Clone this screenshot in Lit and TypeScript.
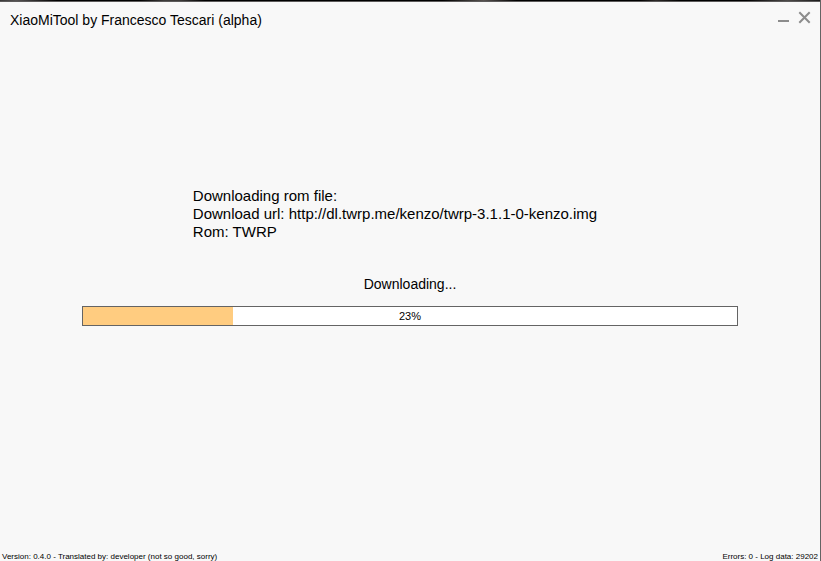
import { LitElement, css, html } from "lit";
import { customElement, property, state } from "lit/decorators.js";

@customElement("title-bar")
class TitleBar extends LitElement {
  @property() heading = "";

  static styles = css`
    :host {
      display: block;
    }
    .bar {
      display: flex;
      justify-content: space-between;
      align-items: flex-start;
      padding: 8px 8px 0 10px;
    }
    .heading {
      margin: 0;
      font-size: 14px;
      font-weight: 400;
      line-height: 20px;
    }
    .controls {
      display: flex;
      gap: 6px;
    }
    .control {
      display: flex;
      align-items: center;
      justify-content: center;
      width: 15px;
      height: 15px;
      padding: 0;
      border: 0;
      background: none;
      color: #8c8c8c;
    }
    .control:hover {
      color: #444444;
    }
    .icon {
      display: block;
      flex: none;
    }
  `;

  render() {
    return html`
      <header class="bar">
        <h1 class="heading">${this.heading}</h1>
        <div class="controls">
          <button class="control" type="button" aria-label="Minimize">
            <svg class="icon" width="15" height="15" viewBox="0 0 15 15" fill="currentColor">
              <path d="M2 10H13V12H2Z" />
            </svg>
          </button>
          <button class="control" type="button" aria-label="Close">
            <svg class="icon" width="15" height="15" viewBox="0 0 15 15" stroke="currentColor" stroke-width="2">
              <path d="M2.3 2.3L12.7 12.7M12.7 2.3L2.3 12.7" />
            </svg>
          </button>
        </div>
      </header>
    `;
  }
}

@customElement("download-progress")
class DownloadProgress extends LitElement {
  @property() label = "";
  @property({ type: Number }) value = 0;

  static styles = css`
    :host {
      display: block;
    }
    .label {
      display: block;
      margin-bottom: 12px;
      font-size: 14px;
      line-height: 20px;
      text-align: center;
    }
    .track {
      display: grid;
      align-items: center;
      width: 80%;
      margin: 0 auto;
    }
    .meter,
    .percent {
      grid-area: 1 / 1;
    }
    .meter {
      appearance: none;
      box-sizing: border-box;
      width: 100%;
      height: 20px;
      border: 1px solid #646464;
      background: #ffffff;
    }
    .meter::-webkit-progress-bar {
      background: #ffffff;
    }
    .meter::-webkit-progress-value {
      background: #ffcc80;
    }
    .percent {
      z-index: 1;
      font-size: 11px;
      line-height: 20px;
      text-align: center;
    }
  `;

  render() {
    return html`
      <label class="label" for="meter">${this.label}</label>
      <div class="track">
        <progress class="meter" id="meter" max="100" .value=${this.value}></progress>
        <span class="percent">${this.value}%</span>
      </div>
    `;
  }
}

@customElement("app-root")
class AppRoot extends LitElement {
  @state() private percent = 23;

  static styles = css`
    :host {
      display: block;
      color: #000000;
      font-family: "Liberation Sans", Arial, sans-serif;
    }
    .window {
      display: flex;
      flex-direction: column;
      box-sizing: border-box;
      min-height: 100vh;
      border-right: 1px solid #646464;
      background: #f8f8f8;
    }
    .edge {
      height: 1px;
      border-bottom: 1px solid #5c5a5a;
      background: linear-gradient(
        90deg,
        #3a3838 0%,
        #555252 2%,
        #000000 7%,
        #000000 17%,
        #3c3a39 20%,
        #3c3a39 22%,
        #000000 25%,
        #000000 54%,
        #575250 59%,
        #000000 63%,
        #000000 78%,
        #2c2928 80%,
        #000000 83%,
        #000000 91%,
        #4c4a49 96%,
        #1a1919 100%
      );
    }
    .content {
      flex: 1;
      padding-top: 157px;
    }
    .message {
      width: fit-content;
      margin: 0 auto 33px;
      padding-right: 30px;
      font-size: 15px;
      line-height: 18px;
    }
    .line {
      margin: 0;
    }
    .status {
      display: flex;
      justify-content: space-between;
      padding: 0 2px;
      font-size: 8px;
      line-height: 8px;
    }
  `;

  render() {
    return html`
      <div class="window">
        <div class="edge"></div>
        <title-bar heading="XiaoMiTool by Francesco Tescari (alpha)"></title-bar>
        <main class="content">
          <div class="message">
            <p class="line">Downloading rom file:</p>
            <p class="line">Download url: http://dl.twrp.me/kenzo/twrp-3.1.1-0-kenzo.img</p>
            <p class="line">Rom: TWRP</p>
          </div>
          <download-progress label="Downloading..." .value=${this.percent}></download-progress>
        </main>
        <footer class="status">
          <span>Version: 0.4.0 - Translated by: developer (not so good, sorry)</span>
          <span>Errors: 0 - Log data: 29202</span>
        </footer>
      </div>
    `;
  }
}
